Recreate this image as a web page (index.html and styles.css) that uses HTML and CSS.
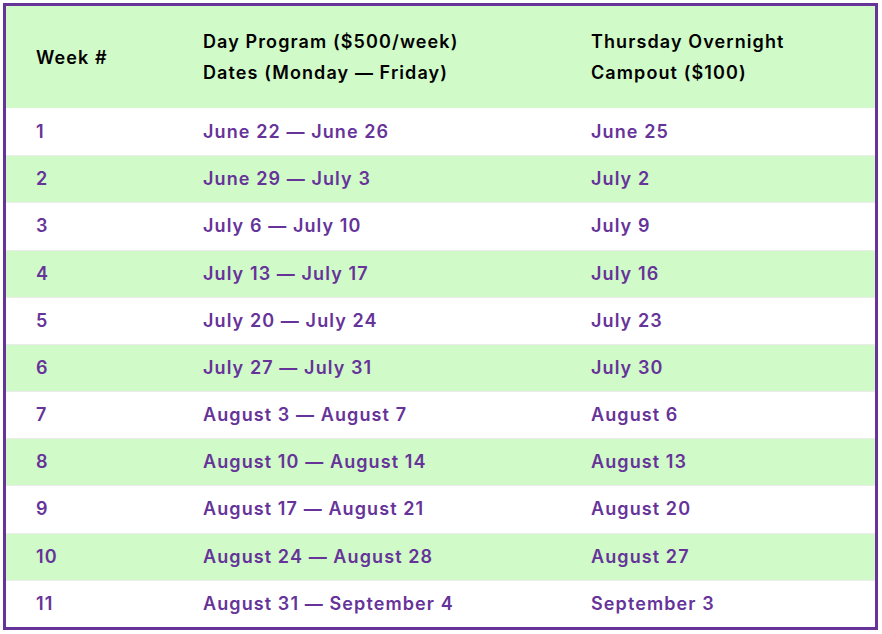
FILE: index.html
```html
<!DOCTYPE html>
<html>
<head>
<meta charset="utf-8">
<link rel="stylesheet" href="styles.css">
</head>
<body>
<div class="wrap">
<table class="sched">
  <thead>
    <tr>
      <th class="c1">Week #</th>
      <th class="c2">Day Program ($500/week)<br>Dates (Monday — Friday)</th>
      <th class="c3">Thursday Overnight<br>Campout ($100)</th>
    </tr>
  </thead>
  <tbody>
    <tr><td>1</td><td>June 22 — June 26</td><td>June 25</td></tr>
    <tr class="alt"><td>2</td><td>June 29 — July 3</td><td>July 2</td></tr>
    <tr><td>3</td><td>July 6 — July 10</td><td>July 9</td></tr>
    <tr class="alt"><td>4</td><td>July 13 — July 17</td><td>July 16</td></tr>
    <tr><td>5</td><td>July 20 — July 24</td><td>July 23</td></tr>
    <tr class="alt"><td>6</td><td>July 27 — July 31</td><td>July 30</td></tr>
    <tr><td>7</td><td>August 3 — August 7</td><td>August 6</td></tr>
    <tr class="alt"><td>8</td><td>August 10 — August 14</td><td>August 13</td></tr>
    <tr><td>9</td><td>August 17 — August 21</td><td>August 20</td></tr>
    <tr class="alt"><td>10</td><td>August 24 — August 28</td><td>August 27</td></tr>
    <tr><td>11</td><td>August 31 — September 4</td><td>September 3</td></tr>
  </tbody>
</table>
</div>
</body>
</html>
```
FILE: styles.css
```css
html, body {
  margin: 0;
  padding: 0;
  background: #ffffff;
}
.wrap {
  padding: 3px 0 0 3px;
}
.sched {
  width: 875px;
  border: 3px solid #663399;
  border-collapse: separate;
  border-spacing: 0;
  box-sizing: border-box;
  font-family: Inter, "Noto Sans", sans-serif;
  font-size: 18px;
  font-weight: 600;
  letter-spacing: 1.1px;
}
.sched th {
  background: #d1fac9;
  color: #000000;
  text-align: left;
  font-weight: 600;
  line-height: 31px;
  height: 102px;
  padding: 0 0 0 30px;
  box-sizing: border-box;
  vertical-align: middle;
}
.sched .c1 { width: 167px; }
.sched .c2 { width: 388px; }
.sched td {
  color: #663399;
  height: 47.18px;
  line-height: 22px;
  padding: 0 0 0 30px;
  box-sizing: border-box;
  border-top: 1px solid #ececec;
  vertical-align: middle;
}
.sched tbody tr:first-child td { border-top: none; }
.sched tr.alt td {
  background: #d1fac9;
}
```
